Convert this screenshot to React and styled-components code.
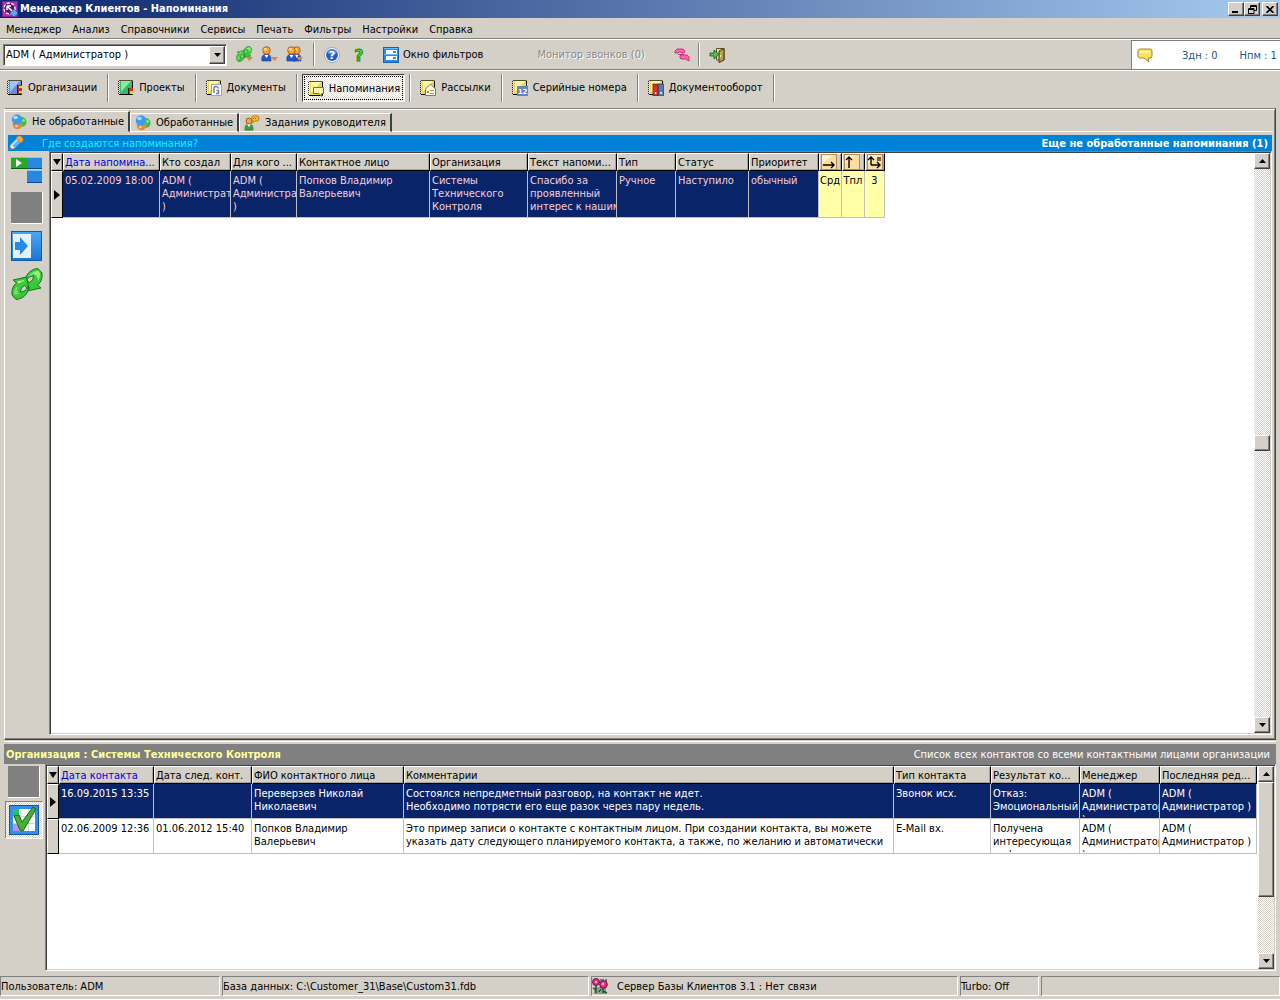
import React from 'react';
import styled, { createGlobalStyle, css } from 'styled-components';

const face = '#d4d0c8';
const shadow = '#808080';
const dark = '#404040';
const navy = '#0a246a';

const GlobalStyle = createGlobalStyle`
  * { box-sizing: border-box; }
  body {
    margin: 0;
    background: ${face};
    color: #000;
    font: 11px/13px "DejaVu Sans Condensed", "DejaVu Sans", sans-serif;
  }
  button, select { font: inherit; color: inherit; margin: 0; padding: 0; border-radius: 0; }
  svg { display: block; flex: none; }
`;

const raised = css`
  border: 1px solid;
  border-color: #fff ${dark} ${dark} #fff;
  box-shadow: inset -1px -1px 0 ${shadow};
  background: ${face};
`;

const Window = styled.div`
  display: flex;
  flex-direction: column;
  min-height: 100vh;
`;

/* ---------- title bar ---------- */

const TitleBar = styled.header`
  display: flex;
  align-items: center;
  height: 18px;
  padding: 0 2px;
  gap: 2px;
  background: linear-gradient(90deg, ${navy}, #a6caf0);
`;

const Title = styled.h1`
  flex: 1;
  margin: 0;
  font-size: 11px;
  font-weight: bold;
  line-height: 18px;
  color: #fff;
  white-space: nowrap;
`;

const Caption = styled.div`
  display: flex;
`;

const CaptionButton = styled.button`
  ${raised}
  width: 16px;
  height: 14px;
  display: grid;
  place-items: center;
`;

/* ---------- menu ---------- */

const MenuBar = styled.nav`
  display: flex;
  align-items: center;
  gap: 11px;
  height: 21px;
  padding: 2px 6px 0;
  border-bottom: 1px solid ${shadow};
`;

const MenuItem = styled.button`
  border: 0;
  background: none;
  white-space: nowrap;
`;

/* ---------- toolbar ---------- */

const ToolBar = styled.div`
  display: flex;
  align-items: center;
  height: 31px;
  padding-left: 3px;
  border-top: 1px solid #fff;
  border-bottom: 1px solid ${shadow};
`;

const Combo = styled.label`
  display: flex;
  width: 224px;
  height: 22px;
  margin-right: 9px;
  padding: 1px;
  background: #fff;
  border: 1px solid;
  border-color: ${shadow} #fff #fff ${shadow};
  box-shadow: inset 1px 1px 0 ${dark};
`;

const ComboSelect = styled.select`
  flex: 1;
  appearance: none;
  border: 0;
  padding: 0 1px;
  background: transparent;
  outline: none;
`;

const ComboArrow = styled.span`
  ${raised}
  width: 16px;
  display: grid;
  place-items: center;
`;

const ToolButton = styled.button`
  display: flex;
  align-items: center;
  gap: 4px;
  padding: 0 4px;
  height: 24px;
  border: 0;
  background: none;
  white-space: nowrap;
  margin-left: ${p => p.$gap || 0}px;
  &:disabled { color: #888; text-shadow: 1px 1px 0 #fff; }
`;

const Divider = styled.span`
  width: 2px;
  height: ${p => p.$h}px;
  margin: ${p => p.$m || '0'};
  border-left: 1px solid ${shadow};
  border-right: 1px solid #fff;
`;

const Indicator = styled.div`
  display: flex;
  align-items: center;
  width: 149px;
  height: 29px;
  margin-left: auto;
  padding: 0 5px;
  background: #fff;
  border-left: 1px solid ${shadow};
  border-top: 1px solid ${shadow};
  color: #1b5a86;
`;

const Counter = styled.span`
  margin-left: ${p => (p.$first ? 29 : 22)}px;
  white-space: nowrap;
`;

/* ---------- section buttons ---------- */

const Sections = styled.nav`
  display: flex;
  align-items: center;
  height: 38px;
  padding: 0 0 4px 2px;
  border-top: 1px solid #fff;
`;

const SectionButton = styled.button`
  display: flex;
  align-items: center;
  gap: 5px;
  height: 28px;
  margin: 0 4px 0 0;
  padding: 0 5px 0 4px;
  border: 1px solid transparent;
  background: none;
  white-space: nowrap;
  ${p => p.$active && css`
    padding: 2px 4px 0 5px;
    border-color: ${dark} #fff #fff ${dark};
    outline: 1px dotted #000;
    outline-offset: -3px;
    background: repeating-conic-gradient(#fff 0 25%, #e6e3de 0 50%) 0 0 / 2px 2px;
  `}
`;

/* ---------- reminders page ---------- */

const Page = styled.main`
  flex: 1;
  display: flex;
  flex-direction: column;
  margin: 0 4px;
  border: 1px solid;
  border-color: ${shadow} ${dark} ${dark} #fff;
  box-shadow: inset 0 1px 0 #fff, inset -1px -1px 0 ${shadow};
  padding: 2px 2px 4px 0;
`;

const Tabs = styled.div`
  display: flex;
  align-items: flex-end;
  height: 21px;
`;

const Tab = styled.button`
  display: flex;
  align-items: center;
  gap: 5px;
  height: ${p => (p.$active ? 21 : 19)}px;
  padding: 0 4px;
  border: 0;
  border-right: 2px solid ${dark};
  border-top: 1px solid #fff;
  border-left: 1px solid #fff;
  border-bottom: 1px solid ${p => (p.$active ? face : '#fff')};
  background: ${face};
  white-space: nowrap;
  ${p => p.$active && css`padding-left: 6px; border-left: 0;`}
`;

const TabFill = styled.span`
  flex: 1;
  border-bottom: 1px solid #fff;
`;

const BlueBar = styled.div`
  display: flex;
  align-items: center;
  justify-content: space-between;
  height: 16px;
  margin: 3px 1px 0 3px;
  padding-right: 4px;
  background: #0082d6;
`;

const Hint = styled.a`
  display: flex;
  align-items: center;
  gap: 18px;
  color: #14f0ff;
  text-decoration: none;
`;

const BarTitle = styled.h2`
  margin: 0;
  font-size: 11px;
  color: #fff;
`;

const Body = styled.div`
  flex: 1;
  display: flex;
  margin: ${p => (p.$lower ? '0' : '0 1px 0 3px')};
`;

const Side = styled.div`
  display: flex;
  flex-direction: column;
  align-items: center;
  width: 41px;
  padding: ${p => (p.$lower ? '2px 2px 0 0' : '3px 3px 0 0')};
  gap: ${p => (p.$lower ? 3 : 6)}px;
`;

const SideButton = styled.button`
  display: grid;
  place-items: center;
  width: 32px;
  height: 32px;
  border: 0;
  background: none;
  ${p => p.$blank && css`
    background: ${shadow};
    border-right: 1px solid #fff;
    border-bottom: 1px solid #fff;
  `}
  ${p => p.$pressed && css`
    width: 38px;
    height: 38px;
    border: 1px solid;
    border-color: ${shadow} #fff #fff ${shadow};
    background: repeating-conic-gradient(#fff 0 25%, ${face} 0 50%) 0 0 / 2px 2px;
  `}
`;

/* ---------- data grid ---------- */

const GridBox = styled.div`
  flex: 1;
  min-width: 0;
  display: flex;
  background: #fff;
  border: 1px solid;
  border-color: ${shadow} #fff #fff ${shadow};
  box-shadow: inset 1px 1px 0 ${dark}, inset -1px -1px 0 ${face};
  padding: 1px;
`;

const Scroller = styled.div`
  flex: 1;
  min-width: 0;
  overflow: hidden;
  padding-right: 1px;
`;

const Table = styled.table`
  table-layout: fixed;
  border-collapse: separate;
  border-spacing: 0;
  width: ${p => (p.$fill ? '100%' : '834px')};
`;

const Head = styled.th`
  height: 18px;
  padding: 0 1px;
  overflow: hidden;
  text-align: left;
  font-weight: normal;
  line-height: 15px;
  white-space: nowrap;
  background: ${face};
  color: ${p => (p.$sorted ? '#0000e0' : '#000')};
  border: 1px solid;
  border-color: #fff #000 #000 #fff;
  box-shadow: inset -1px -1px 0 #a8a49c;
`;

const Mark = styled.td`
  height: ${p => p.$h}px;
  padding: 0;
  background: ${face};
  border: 1px solid;
  border-color: #fff #000 #000 #fff;
  vertical-align: middle;
  svg { margin: 0 auto; }
`;

const Cell = styled.td`
  padding: 3px 0 0 2px;
  overflow: hidden;
  vertical-align: top;
  white-space: pre;
  border-right: 1px solid #c0c0c0;
  border-bottom: 1px solid #c0c0c0;
  ${p => p.$tone === 'pink' && css`background: ${navy}; color: #f6cfd6;`}
  ${p => p.$tone === 'selected' && css`background: ${navy}; color: #fff;`}
  ${p => p.$tone === 'yellow' && css`background: #ffffa8; text-align: center; padding-left: 0;`}
`;

const Clip = styled.div`
  height: ${p => p.$h}px;
  overflow: hidden;
`;

/* ---------- scroll bar ---------- */

const Track = styled.div`
  display: flex;
  flex-direction: column;
  width: 16px;
  background: repeating-conic-gradient(#fff 0 25%, ${face} 0 50%) 0 0 / 2px 2px;
`;

const ArrowButton = styled.button`
  ${raised}
  height: 16px;
  display: grid;
  place-items: center;
`;

const Rail = styled.div`
  flex: 1;
  display: flex;
  flex-direction: column;
  justify-content: ${p => p.$align};
`;

const Thumb = styled.div`
  ${raised}
  height: ${p => p.$size};
`;

/* ---------- contacts pane ---------- */

const Contacts = styled.section`
  display: flex;
  flex-direction: column;
  height: 230px;
  margin: 1px 4px 5px;
  border-top: 1px solid #fff;
  padding-top: 2px;
`;

const GrayBar = styled.div`
  display: flex;
  align-items: center;
  justify-content: space-between;
  height: 20px;
  padding: 0 6px 0 2px;
  background: ${shadow};
  color: #fff;
`;

const OrgTitle = styled.h2`
  margin: 0;
  font-size: 11px;
  color: #ffff9c;
`;

/* ---------- status bar ---------- */

const StatusBar = styled.footer`
  display: flex;
  gap: 2px;
  height: 24px;
  padding-bottom: 3px;
  border-bottom: 1px solid #fff;
`;

const Status = styled.div`
  display: flex;
  align-items: center;
  gap: 8px;
  flex: ${p => p.$flex};
  white-space: nowrap;
  border: 1px solid;
  border-color: ${shadow} #fff #fff ${shadow};
`;

/* ---------- icons ---------- */

const Svg = ({ s = 16, w, h, children, ...rest }) => (
  <svg width={w || s} height={h || s} viewBox={`0 0 ${w || s} ${h || s}`} aria-hidden="true" {...rest}>{children}</svg>
);

const Tri = ({ dir = 'down', w = 7 }) => {
  const d = { down: 'M0 0H7L3.5 4Z', up: 'M0 4H7L3.5 0Z' }[dir];
  return <svg width={w} height="4" viewBox="0 0 7 4" aria-hidden="true"><path d={d} /></svg>;
};

const AppIcon = () => (
  <Svg>
    <rect width="16" height="16" fill="#8b1a96" />
    <rect x="1" y="1" width="14" height="14" fill="#b030b4" />
    <circle cx="7.500" cy="7.500" r="5.500" fill="#5c1470" stroke="#fff" strokeWidth="1.300" strokeDasharray="3 1.500" />
    <path d="M5 5H9M5 5V9M5 5L10 10" stroke="#fff" strokeWidth="1.500" fill="none" />
    <path d="M12 8L16 12L12 16L8 12Z" fill="#58a8f0" stroke="#2060b8" strokeWidth=".6" />
  </Svg>
);

const ribbon = 'M14 13C15 6 20 1 27 0.500L31 5C31.500 11 29.500 15 26.500 17L30 20L16.500 23L14 11L18.500 14.500C21 13 22.500 11 22.500 8C19 8 17 10 15.500 12Z';

const Ribbons = () => (
  <>
    <path d={ribbon} fill="#3cc83a" stroke="#0c7a16" />
    <path d="M17 9C20 5 24 3 27 2.500L29 5C29 8 28.500 11 27 13C27 9 25 6 22 6Z" fill="#98f078" />
    <g transform="rotate(180 16 16)">
      <path d={ribbon} fill="#3cc83a" stroke="#0c7a16" />
      <path d="M19 20L26 18.500L24.500 16.500L19 19Z" fill="#a8f890" />
      <path d="M24 6C26 8 26.500 11 25 14C28 12 29.500 9 29 5.500Z" fill="#78e060" />
    </g>
  </>
);

const Recycle = () => <Svg s={32}><Ribbons /></Svg>;

const Drop = () => <path d="M10 11H17L13.500 15Z" fill="#f08030" />;

const RefreshSmall = () => (
  <Svg s={17}>
    <g transform="scale(.5)"><Ribbons /></g>
    <Drop />
  </Svg>
);

const Person = ({ x = 0 }) => (
  <g transform={`translate(${x} 0)`}>
    <path d="M1 15C0 11 2 8 5.500 8S10 10 10 15Z" fill="#2858c8" stroke="#183880" strokeWidth=".6" />
    <path d="M3.500 9L5.500 12L7.500 9Z" fill="#fff" />
    <circle cx="5.500" cy="4.500" r="3.800" fill="#f8a030" stroke="#9c5010" strokeWidth=".8" />
    <ellipse cx="4.500" cy="3.200" rx="1.800" ry="1.200" fill="#ffd890" />
  </g>
);

const User = () => <Svg s={17}><Person /><Drop /></Svg>;
const Users = () => <Svg s={17}><Person x={5} /><Person /><Drop /></Svg>;

const Glyph = styled.text`
  font: bold ${p => p.$size}px "DejaVu Sans", sans-serif;
  text-anchor: middle;
`;

const HelpBlue = () => (
  <Svg>
    <circle cx="8" cy="8" r="7.500" fill="#fff" stroke="#8898b0" strokeWidth=".8" />
    <circle cx="8" cy="8" r="6" fill="#2860c8" />
    <ellipse cx="8" cy="5" rx="4.500" ry="2.800" fill="#5890e8" />
    <Glyph x="8" y="12" $size={11} fill="#fff">?</Glyph>
  </Svg>
);

const HelpGreen = () => (
  <Svg>
    <Glyph x="8" y="14" $size={16} fill="#58d020" stroke="#208010" strokeWidth=".8">?</Glyph>
  </Svg>
);

const FilterIcon = () => (
  <Svg>
    <rect x=".5" y=".5" width="15" height="15" fill="#2c8ae0" stroke="#1860b0" />
    <path d="M1 1.500H15M1 7.500H15" stroke="#60b8ff" />
    <rect x="3" y="3" width="11" height="4" fill="#f4faff" /><rect x="3" y="9" width="11" height="4" fill="#f4faff" />
    <rect x="10" y="4" width="3" height="2" fill="#28b048" /><rect x="10" y="10" width="3" height="2" fill="#28b048" />
  </Svg>
);

const PhoneIcon = () => (
  <Svg>
    <path d="M3 2H9L11 4L10 6H8L7 5H5L4 6H1V4Z" fill="#ff68b0" stroke="#c01868" strokeWidth=".8" />
    <path d="M6 9L7 8H13L15 10V14L13 13L12 12H7L6 11Z" fill="#ff68b0" stroke="#c01868" strokeWidth=".8" />
    <path d="M4 7.500H10" stroke="#e02880" />
  </Svg>
);

const ExitIcon = () => (
  <Svg>
    <path d="M7.500 1.500H15V13H7.500Z" fill="#f0e8b8" stroke="#605018" />
    <path d="M10 4L15 1.500V13L10 15.500Z" fill="#b8a050" stroke="#403408" />
    <rect x="11" y="8" width="1" height="2" fill="#fff0a0" />
    <path d="M1 6H5V3L10 7.500L5 12V9H1Z" fill="#50c050" stroke="#0c5a18" strokeWidth=".8" />
  </Svg>
);

const Bubble = () => (
  <Svg w={16} h={15}>
    <path d="M3 1H13Q15 1 15 3V8Q15 10 13 10H11L12 14L7 10H3Q1 10 1 8V3Q1 1 3 1Z" fill="#ffe060" stroke="#a88828" />
    <path d="M3 3H13V5H3Z" fill="#fff4a8" />
  </Svg>
);

const Book = ({ color, light, children }) => (
  <Svg>
    <rect x="1" y="0" width="14" height="15" fill={color} />
    <path d="M3 1H13L3 12Z" fill={light} />
    <path d="M1 .5H14.500" stroke="#505030" />
    <path d="M1.500 1V15" stroke="#fff" strokeDasharray="1 1" />
    <path d="M.5 1V15" stroke="#202020" strokeDasharray="1 1" />
    <path d="M14.500 1V14.500H1" fill="none" stroke="#000" />
    {children}
  </Svg>
);

const yellow = { color: '#ecd848', light: '#fff6a8' };

const OrgIcon = () => (
  <Book color="#6890d8" light="#a0c4f4">
    <path d="M11 5H15V14H11Z" fill="#c83020" /><path d="M12 6H15V8H12ZM12 11H15V13H12Z" fill="#f8d020" /><path d="M10.500 5V14" stroke="#202020" />
  </Book>
);
const ProjIcon = () => (
  <Book color="#38b868" light="#88e8a8">
    <path d="M11 8H15V14H11Z" fill="#c83020" /><path d="M12 11H15V14H12Z" fill="#f8d020" /><path d="M10.500 8V14" stroke="#202020" />
  </Book>
);
const DocIcon = () => (
  <Book {...yellow}>
    <rect x="5.500" y="4.500" width="10" height="11" fill="#f4f8ff" stroke="#a0a8b8" />
    <path d="M8 13V8.500Q8 6.500 10 6.500T12.500 8.500M10 13.500H12.500V10.500H10.500" fill="none" stroke="#7080a0" strokeWidth="1.400" />
  </Book>
);
const RemIcon = () => (
  <Book {...yellow}>
    <path d="M5.500 6.500H15.500V12.500H13.500V15.500L11 12.500H5.500Z" fill="#fff8b0" stroke="#887018" />
  </Book>
);
const MailIcon = () => (
  <Book {...yellow}>
    <path d="M5.500 15.500V9L10.500 4L15.500 9V15.500Z" fill="#fff8e8" stroke="#907838" />
    <path d="M7 11H9V13H7Z" fill="#f07820" /><path d="M10 10.500H14M10 13.500H14" stroke="#a09070" />
  </Book>
);
const SerialIcon = () => (
  <Book {...yellow}>
    <rect x="5" y="6" width="11" height="10" fill="#6880c8" />
    <Glyph x="10.500" y="14" $size={7} fill="#fff">12</Glyph>
  </Book>
);
const FlowIcon = () => (
  <Book {...yellow}>
    <rect x="5" y="4" width="5" height="12" fill="#d83028" stroke="#701010" strokeWidth=".7" />
    <rect x="10.500" y="4" width="5" height="12" fill="#5878b8" stroke="#203868" strokeWidth=".7" />
    <path d="M7.500 12V14M13 12V14" stroke="#fff" strokeWidth="1.500" />
  </Book>
);

const Balls = () => (
  <Svg>
    <circle cx="10.500" cy="8" r="5" fill="#38c040" />
    <circle cx="6.500" cy="10.500" r="4.800" fill="#f08830" />
    <circle cx="6" cy="5.500" r="5.200" fill="#3c9cec" />
    <ellipse cx="4.500" cy="3.500" rx="2.400" ry="1.800" fill="#a8dcff" />
    <circle cx="5.500" cy="12" r="1.300" fill="#ffc890" />
    <circle cx="12.500" cy="6.500" r="1.300" fill="#98f0a0" />
  </Svg>
);

const TaskIcon = () => (
  <Svg>
    <path d="M1 15C1 11 2 9 5 9S9 11 9 15Z" fill="#38a838" stroke="#186018" strokeWidth=".7" />
    <path d="M3 9L5 12L7 9Z" fill="#fff" />
    <circle cx="5" cy="6" r="3" fill="#f0a848" stroke="#804810" strokeWidth=".8" />
    <path d="M9 1H14Q16 3 14 6H11L8 8L9 6Q6 4 9 1Z" fill="#f8c030" stroke="#b06810" strokeWidth=".8" />
    <path d="M9 3.500H13" stroke="#a05008" strokeDasharray="1 1" />
  </Svg>
);

const Pencil = () => (
  <Svg>
    <path d="M3 9L9 3L13 7L7 13Z" fill="#68b0f8" />
    <path d="M4 10L10 4" stroke="#c8e8ff" strokeWidth="1.500" />
    <path d="M8 3L10 1Q12 0 14 2T15 6L13 8Z" fill="#f8a838" stroke="#b86010" strokeWidth=".6" />
    <path d="M1 15L3 9L7 13Z" fill="#fff0c0" /><path d="M1 15L2 12L4 14Z" fill="#705020" />
  </Svg>
);

const TilesIcon = () => (
  <Svg s={32}>
    <rect x="0" y="3" width="16" height="12" fill="#28a828" /><path d="M0 3.500H16" stroke="#70e070" /><path d="M0 14.500H16" stroke="#086010" />
    <path d="M5 5L11 9L5 13Z" fill="#fff" />
    <rect x="16" y="3" width="15" height="12" fill="#2888e0" /><path d="M16 3.500H31" stroke="#80c8ff" /><path d="M16 14.500H31" stroke="#0c4898" />
    <rect x="16" y="16" width="15" height="13" fill="#2888e0" /><path d="M16 16.500H31" stroke="#80c8ff" /><path d="M16 28.500H31" stroke="#0c4898" />
  </Svg>
);

const MoveIcon = () => (
  <Svg s={32}>
    <defs><linearGradient id="sky" x1="0" y1="0" x2="0" y2="1"><stop offset="0" stopColor="#48a8f8" /><stop offset="1" stopColor="#1c74d8" /></linearGradient></defs>
    <rect x=".5" y="1.500" width="30" height="29" fill="url(#sky)" stroke="#1458a8" />
    <rect x="2" y="4" width="18" height="24" fill="#e4f2ff" />
    <path d="M4 12H9V7L17 16L9 25V20H4Z" fill="#2888e8" />
  </Svg>
);

const CheckIcon = () => (
  <Svg s={30}>
    <rect x=".5" y=".5" width="29" height="29" fill="#3090e8" stroke="#1458a8" />
    <rect x="4" y="4" width="22" height="22" fill="#fff" />
    <rect x="4" y="4" width="6" height="7" fill="#28c068" /><rect x="4" y="18" width="7" height="8" fill="#b098e8" />
    <path d="M4 11.500H26M4 18.500H26M11.500 4V26M19.500 4V26" stroke="#c8d8e8" />
    <path d="M5 11L10 10L13 17L24 2L27 4L14 26L11 25Z" fill="#48b030" stroke="#186810" />
  </Svg>
);

const PrioIcon = ({ d, dot }) => (
  <Svg>
    <rect x=".5" y=".5" width="15" height="15" fill="#fcdca0" stroke="#b88848" />
    <path d="M1 1H12L1 10Z" fill="#fff0d0" />
    {dot && <rect x="10" y="3" width="4" height="4" fill="#706050" />}
    <path d={d} fill="none" stroke="#000" strokeWidth="1.400" />
  </Svg>
);

const Flower = () => (
  <Svg w={17} h={16}>
    <rect x="2" y="9" width="12" height="7" fill="#909890" />
    <path d="M4 7V15M11 10V15M4 12L1 10M11 13L15 15" stroke="#186028" strokeWidth="1.500" />
    <circle cx="4" cy="4" r="3.500" fill="#e82888" stroke="#701040" /><circle cx="11.500" cy="6.500" r="3.800" fill="#e82888" stroke="#701040" />
    <circle cx="4" cy="4" r="1.300" fill="#ffa8d0" /><circle cx="11" cy="6" r="1.400" fill="#ffa8d0" />
    <path d="M8 2H12M14 1V4M7 14L9 11" stroke="#202020" />
  </Svg>
);

const RowPointer = () => <Svg w={6} h={10}><path d="M0 0L6 5L0 10Z" /></Svg>;

/* ---------- data ---------- */

const MENU = ['Менеджер', 'Анализ', 'Справочники', 'Сервисы', 'Печать', 'Фильтры', 'Настройки', 'Справка'];

const SECTIONS = [
  ['Организации', OrgIcon], ['Проекты', ProjIcon], ['Документы', DocIcon], ['Напоминания', RemIcon],
  ['Рассылки', MailIcon], ['Серийные номера', SerialIcon], ['Документооборот', FlowIcon],
];

const REMINDER_COLS = [
  ['Дата напомина...', 97], ['Кто создал', 71], ['Для кого ...', 66], ['Контактное лицо', 133], ['Организация', 98],
  ['Текст напоми...', 89], ['Тип', 59], ['Статус', 73], ['Приоритет', 70],
];

const PRIO_COLS = [
  [23, 'M2 11H13M10 8L13 11L10 14', false],
  [23, 'M5 14V3M2 6L5 3L8 6', false],
  [20, 'M4 11V3M1 6L4 3L7 6M4 11H13M10 8L13 11L10 14', true],
];

const REMINDER = [
  '05.02.2009 18:00', 'ADM (\nАдминистратор\n)', 'ADM (\nАдминистратор\n)', 'Попков Владимир\nВалерьевич',
  'Системы\nТехнического\nКонтроля', 'Спасибо за\nпроявленный\nинтерес к нашим', 'Ручное', 'Наступило', 'обычный',
];

const CONTACT_COLS = [
  ['Дата контакта', 95], ['Дата след. конт.', 98], ['ФИО контактного лица', 152], ['Комментарии', null],
  ['Тип контакта', 97], ['Результат ко...', 89], ['Менеджер', 80], ['Последняя ред...', 97],
];

const CONTACTS = [
  ['16.09.2015 13:35', '', 'Переверзев Николай\nНиколаевич',
    'Состоялся непредметный разговор, на контакт не идет.\nНеобходимо потрясти его еще разок через пару недель.',
    'Звонок исх.', 'Отказ:\nЭмоциональный', 'ADM (\nАдминистратор\n)', 'ADM (\nАдминистратор )'],
  ['02.06.2009 12:36', '01.06.2012 15:40', 'Попков Владимир\nВалерьевич',
    'Это пример записи о контакте с контактным лицом. При создании контакта, вы можете\nуказать дату следующего планируемого контакта, а также, по желанию и автоматически',
    'E-Mail вх.', 'Получена\nинтересующая\nинформация', 'ADM (\nАдминистратор\n)', 'ADM (\nАдминистратор )'],
];

const ScrollBar = ({ align, size }) => (
  <Track>
    <ArrowButton aria-label="Вверх"><Tri dir="up" /></ArrowButton>
    <Rail $align={align}><Thumb $size={size} /></Rail>
    <ArrowButton aria-label="Вниз"><Tri /></ArrowButton>
  </Track>
);

const MenuMark = () => <Svg w={8} h={6}><path d="M0 0H8L4 6Z" /></Svg>;

export default function App() {
  return (
    <>
      <GlobalStyle />
      <Window>
        <TitleBar>
          <AppIcon />
          <Title>Менеджер Клиентов - Напоминания</Title>
          <Caption>
            <CaptionButton aria-label="Свернуть"><Svg w={8} h={8}><path d="M0 6H6V8H0Z" /></Svg></CaptionButton>
            <CaptionButton aria-label="Восстановить">
              <Svg w={9} h={9}><path d="M2.500 3V.5H8.500V5.500H6M2 1.500H9M.5 3.500H6V8.500H.5ZM0 4.500H6" fill="none" stroke="#000" /></Svg>
            </CaptionButton>
          </Caption>
          <CaptionButton aria-label="Закрыть"><Svg w={8} h={7}><path d="M.5 0L7.500 7M7.500 0L.5 7" stroke="#000" strokeWidth="1.600" /></Svg></CaptionButton>
        </TitleBar>

        <MenuBar>{MENU.map(m => <MenuItem key={m}>{m}</MenuItem>)}</MenuBar>

        <ToolBar>
          <Combo>
            <ComboSelect aria-label="Менеджер"><option>ADM ( Администратор )</option></ComboSelect>
            <ComboArrow><Tri /></ComboArrow>
          </Combo>
          <ToolButton aria-label="Обновить" $gap={-4}><RefreshSmall /></ToolButton>
          <ToolButton aria-label="Менеджер"><User /></ToolButton>
          <ToolButton aria-label="Группа"><Users /></ToolButton>
          <Divider $h={23} $m="0 5px 0 6px" />
          <ToolButton aria-label="Справка"><HelpBlue /></ToolButton>
          <ToolButton aria-label="Помощь" $gap={3}><HelpGreen /></ToolButton>
          <ToolButton $gap={8}><FilterIcon />Окно фильтров</ToolButton>
          <ToolButton disabled $gap={46}>Монитор звонков (0)</ToolButton>
          <ToolButton aria-label="Звонки" $gap={21}><PhoneIcon /></ToolButton>
          <Divider $h={23} $m="0 5px 0 4px" />
          <ToolButton aria-label="Выход"><ExitIcon /></ToolButton>
          <Indicator>
            <Bubble />
            <Counter $first>Здн : 0</Counter>
            <Counter>Нпм : 1</Counter>
          </Indicator>
        </ToolBar>

        <Sections>
          {SECTIONS.map(([name, Icon]) => (
            <React.Fragment key={name}>
              <SectionButton $active={name === 'Напоминания'}><Icon />{name}</SectionButton>
              <Divider $h={28} $m="0 4px 0 0" />
            </React.Fragment>
          ))}
        </Sections>

        <Page>
          <Tabs role="tablist">
            <Tab role="tab" aria-selected="true" $active><Balls />Не обработанные</Tab>
            <Tab role="tab" aria-selected="false"><Balls />Обработанные</Tab>
            <Tab role="tab" aria-selected="false"><TaskIcon />Задания руководителя</Tab>
            <TabFill />
          </Tabs>
          <BlueBar>
            <Hint href="#hint"><Pencil />Где создаются напоминания?</Hint>
            <BarTitle>Еще не обработанные напоминания (1)</BarTitle>
          </BlueBar>
          <Body>
            <Side>
              <SideButton aria-label="Структура"><TilesIcon /></SideButton>
              <SideButton aria-label="Пусто" $blank />
              <SideButton aria-label="Перейти"><MoveIcon /></SideButton>
              <SideButton aria-label="Обновить"><Recycle /></SideButton>
            </Side>
            <GridBox>
              <Scroller>
                <Table>
                  <colgroup>
                    <col style={{ width: 12 }} />
                    {REMINDER_COLS.map(([n, w]) => <col key={n} style={{ width: w }} />)}
                    {PRIO_COLS.map(([w, d]) => <col key={d} style={{ width: w }} />)}
                  </colgroup>
                  <thead>
                    <tr>
                      <Head><MenuMark /></Head>
                      {REMINDER_COLS.map(([n], i) => <Head key={n} $sorted={i === 0}>{n}</Head>)}
                      {PRIO_COLS.map(([, d, dot]) => <Head key={d}><PrioIcon d={d} dot={dot} /></Head>)}
                    </tr>
                  </thead>
                  <tbody>
                    <tr>
                      <Mark $h={47}><RowPointer /></Mark>
                      {REMINDER.map((t, i) => <Cell key={i} $tone="pink"><Clip $h={43}>{t}</Clip></Cell>)}
                      {['Срд', 'Тпл', '3'].map(t => <Cell key={t} $tone="yellow">{t}</Cell>)}
                    </tr>
                  </tbody>
                </Table>
              </Scroller>
              <ScrollBar align="center" size="16px" />
            </GridBox>
          </Body>
        </Page>

        <Contacts>
          <GrayBar>
            <OrgTitle>Организация : Системы Технического Контроля</OrgTitle>
            <span>Список всех контактов со всеми контактными лицами организации</span>
          </GrayBar>
          <Body $lower>
            <Side $lower>
              <SideButton aria-label="Пусто" $blank />
              <SideButton aria-label="Отметить" aria-pressed="true" $pressed><CheckIcon /></SideButton>
            </Side>
            <GridBox>
              <Scroller>
                <Table $fill>
                  <colgroup>
                    <col style={{ width: 12 }} />
                    {CONTACT_COLS.map(([n, w]) => <col key={n} style={w ? { width: w } : undefined} />)}
                  </colgroup>
                  <thead>
                    <tr>
                      <Head><MenuMark /></Head>
                      {CONTACT_COLS.map(([n], i) => <Head key={n} $sorted={i === 0}>{n}</Head>)}
                    </tr>
                  </thead>
                  <tbody>
                    {CONTACTS.map((row, r) => (
                      <tr key={r}>
                        <Mark $h={35}>{r === 0 && <RowPointer />}</Mark>
                        {row.map((t, i) => (
                          <Cell key={i} $tone={r === 0 ? 'selected' : undefined}><Clip $h={30}>{t}</Clip></Cell>
                        ))}
                      </tr>
                    ))}
                  </tbody>
                </Table>
              </Scroller>
              <ScrollBar align="flex-start" size="67%" />
            </GridBox>
          </Body>
        </Contacts>

        <StatusBar>
          <Status $flex="0 0 220px">Пользователь: ADM</Status>
          <Status $flex="1 1 0">База данных: C:\Customer_31\Base\Custom31.fdb</Status>
          <Status $flex="1 1 0"><Flower />Сервер Базы Клиентов 3.1 : Нет связи</Status>
          <Status $flex="0 0 79px">Turbo: Off</Status>
          <Status $flex="0 0 239px" />
        </StatusBar>
      </Window>
    </>
  );
}
